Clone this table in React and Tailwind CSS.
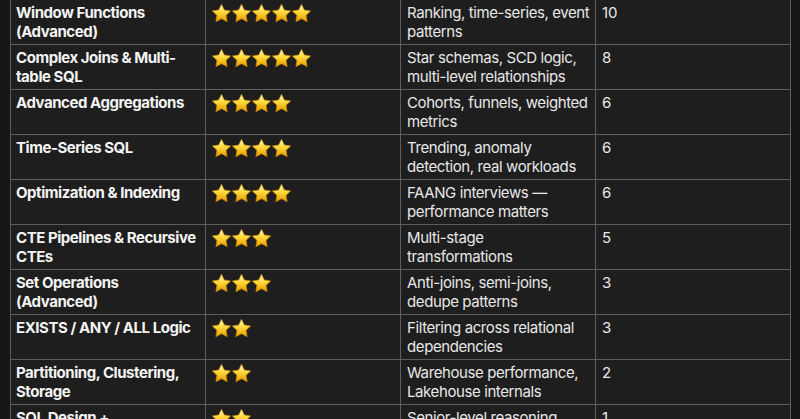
import React from 'react';

// lines are split as in the original layout
const rows = [
  { name: ['Window Functions', '(Advanced)'], stars: 5, desc: ['Ranking, time-series, event', 'patterns'], count: '10' },
  { name: ['Complex Joins & Multi-', 'table SQL'], stars: 5, desc: ['Star schemas, SCD logic,', 'multi-level relationships'], count: '8' },
  { name: ['Advanced Aggregations'], stars: 4, desc: ['Cohorts, funnels, weighted', 'metrics'], count: '6' },
  { name: ['Time-Series SQL'], stars: 4, desc: ['Trending, anomaly', 'detection, real workloads'], count: '6' },
  { name: ['Optimization & Indexing'], stars: 4, desc: ['FAANG interviews —', 'performance matters'], count: '6' },
  { name: ['CTE Pipelines & Recursive', 'CTEs'], stars: 3, desc: ['Multi-stage', 'transformations'], count: '5' },
  { name: ['Set Operations', '(Advanced)'], stars: 3, desc: ['Anti-joins, semi-joins,', 'dedupe patterns'], count: '3' },
  { name: ['EXISTS / ANY / ALL Logic'], stars: 2, desc: ['Filtering across relational', 'dependencies'], count: '3' },
  { name: ['Partitioning, Clustering,', 'Storage'], stars: 2, desc: ['Warehouse performance,', 'Lakehouse internals'], count: '2' },
  { name: ['SQL Design +', 'Architecture'], stars: 2, desc: ['Senior-level reasoning', 'about schemas'], count: '1' },
];

function Star() {
  return (
    <svg width="19" height="19" viewBox="1.6 1.2 20.8 20.8" className="shrink-0">
      <defs>
        <linearGradient id="starFill" x1="0" y1="0" x2="0" y2="1">
          <stop offset="0" stopColor="#fffbd0" />
          <stop offset="0.45" stopColor="#ffd93a" />
          <stop offset="1" stopColor="#e89a00" />
        </linearGradient>
      </defs>
      <path
        d="M12 1.5l3.09 6.26L22 8.77l-5 4.87 1.18 6.88L12 17.27l-6.18 3.25L7 13.64 2 8.77l6.91-1.01L12 1.5z"
        fill="url(#starFill)"
        stroke="#d08a00"
        strokeWidth="0.7"
        strokeLinejoin="round"
      />
    </svg>
  );
}

function Lines({ lines }) {
  return lines.map((line) => (
    <div key={line} className="whitespace-nowrap">
      {line}
    </div>
  ));
}

export default function App() {
  return (
    <div className="h-[419px] w-[800px] overflow-hidden bg-[#161616] font-['Inter',sans-serif] text-[15px] leading-[19px]">
      <table className="-mt-px ml-[10px] w-[780px] table-fixed border-collapse bg-[#1e1e1e]">
        <colgroup>
          <col className="w-[195px]" />
          <col className="w-[195px]" />
          <col className="w-[195px]" />
          <col className="w-[195px]" />
        </colgroup>
        <tbody>
          {rows.map((row) => (
            <tr key={row.name[0]} className="h-[45px]">
              <td className="border border-[#5e5e5e] px-[5px] pt-[3px] pb-[3px] align-top font-bold tracking-[-0.45px] text-[#f4f4f4]">
                <Lines lines={row.name} />
              </td>
              <td className="border border-[#5e5e5e] px-[6px] pt-[3px] pb-[3px] align-top">
                <div className="flex gap-[1px] pt-[1px]">
                  {Array.from({ length: row.stars }).map((_, i) => (
                    <Star key={i} />
                  ))}
                </div>
              </td>
              <td className="border border-[#5e5e5e] px-[6px] pt-[3px] pb-[3px] align-top tracking-[-0.4px] text-[#e8e8e8]">
                <Lines lines={row.desc} />
              </td>
              <td className="border border-[#5e5e5e] px-[6px] pt-[3px] pb-[3px] align-top text-[#e8e8e8]">
                {row.count}
              </td>
            </tr>
          ))}
        </tbody>
      </table>
    </div>
  );
}
